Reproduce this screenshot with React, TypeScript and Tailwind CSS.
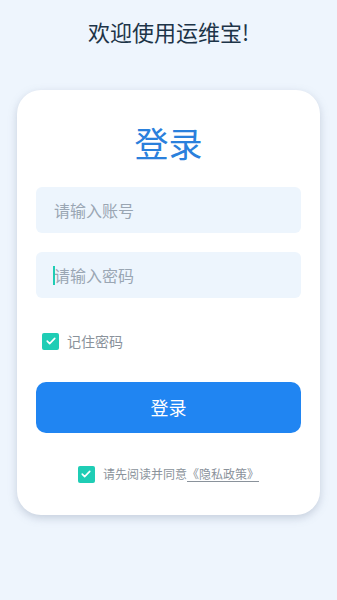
import { useState } from "react";

const font = { fontFamily: '"Noto Sans CJK SC", "Noto Sans", sans-serif' };

function Check({ checked, onClick }: { checked: boolean; onClick: () => void }) {
  return (
    <button
      type="button"
      onClick={onClick}
      className={`flex h-[17px] w-[17px] shrink-0 items-center justify-center rounded-[2px] ${
        checked ? "bg-[#1fcdb5]" : "border border-[#c8ced6] bg-white"
      }`}
    >
      {checked && (
        <svg viewBox="0 0 16 16" className="h-3 w-3" fill="none">
          <path d="M3 8.2l3.2 3.2L13 4.6" stroke="white" strokeWidth="2.2" strokeLinecap="round" strokeLinejoin="round" />
        </svg>
      )}
    </button>
  );
}

export default function App() {
  const [remember, setRemember] = useState(true);
  const [agree, setAgree] = useState(true);
  const [pwd, setPwd] = useState("");

  return (
    <div className="min-h-[600px] bg-[#eef5fd] pt-[16px]" style={font}>
      <h1 className="text-center text-[22px] leading-[30px] text-[#1d3448]">欢迎使用运维宝!</h1>

      <div className="mx-[17px] mt-[44px] rounded-[24px] bg-white px-[19px] pb-[31px] pt-[32px] shadow-[0_3px_8px_rgba(120,135,160,0.35)]">
        <h2 className="text-center text-[34px] leading-[42px] text-[#2a80dc]">登录</h2>

        <input
          placeholder="请输入账号"
          className="mt-[23px] block h-[46px] w-full rounded-[6px] bg-[#edf5fd] px-[18px] text-[16px] text-[#333] outline-none placeholder:text-[#9aa6b3]"
        />
        <div className="relative mt-[19px]">
          <input
            type="password"
            placeholder="请输入密码"
            value={pwd}
            onChange={(e) => setPwd(e.target.value)}
            className="block h-[46px] w-full rounded-[6px] bg-[#edf5fd] px-[18px] text-[16px] text-[#333] caret-[#1fcdb5] outline-none placeholder:text-[#9aa6b3]"
          />
          {pwd === "" && (
            <span className="pointer-events-none absolute left-[17px] top-[14px] h-[19px] w-[2px] bg-[#1fcdb5]" />
          )}
        </div>

        <div className="mt-[33px] flex h-5 items-center gap-2 pl-[6px]">
          <Check checked={remember} onClick={() => setRemember(!remember)} />
          <span className="text-[14px] text-[#8a929b]">记住密码</span>
        </div>

        <button
          type="button"
          className="mt-[31px] block h-[51px] w-full rounded-[10px] bg-[#2085f2] text-[18px] text-white"
        >
          登录
        </button>

        <div className="mt-[31px] flex h-5 items-center justify-center gap-2 text-[12px] text-[#8a929b]">
          <Check checked={agree} onClick={() => setAgree(!agree)} />
          <span>
            请先阅读并同意<span className="underline underline-offset-2">《隐私政策》</span>
          </span>
        </div>
      </div>
    </div>
  );
}
